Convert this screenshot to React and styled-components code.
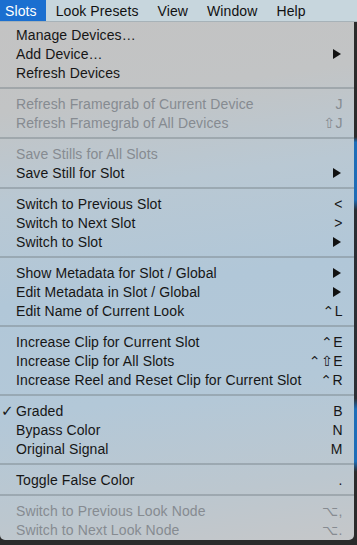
import React from 'react'
import styled, { createGlobalStyle } from 'styled-components'

const GlobalStyle = createGlobalStyle`
  html, body {
    margin: 0;
    padding: 0;
    background: #25292e;
  }
  body {
    font-family: "Liberation Sans", Arial, "DejaVu Sans", sans-serif;
    -webkit-font-smoothing: antialiased;
  }
`

const menuItems = [
  { label: 'Manage Devices…' },
  { label: 'Add Device…', sub: true },
  { label: 'Refresh Devices' },
  'sep',
  { label: 'Refresh Framegrab of Current Device', key: 'J', disabled: true },
  { label: 'Refresh Framegrab of All Devices', key: '⇧J', disabled: true },
  'sep',
  { label: 'Save Stills for All Slots', disabled: true },
  { label: 'Save Still for Slot', sub: true },
  'sep',
  { label: 'Switch to Previous Slot', key: '<' },
  { label: 'Switch to Next Slot', key: '>' },
  { label: 'Switch to Slot', sub: true },
  'sep',
  { label: 'Show Metadata for Slot / Global', sub: true },
  { label: 'Edit Metadata in Slot / Global', sub: true },
  { label: 'Edit Name of Current Look', key: '⌃L' },
  'sep',
  { label: 'Increase Clip for Current Slot', key: '⌃E' },
  { label: 'Increase Clip for All Slots', key: '⌃⇧E' },
  { label: 'Increase Reel and Reset Clip for Current Slot', key: '⌃R' },
  'sep',
  { label: 'Graded', key: 'B', checked: true },
  { label: 'Bypass Color', key: 'N' },
  { label: 'Original Signal', key: 'M' },
  'sep',
  { label: 'Toggle False Color', key: '.' },
  'sep',
  { label: 'Switch to Previous Look Node', key: '⌥,', disabled: true },
  { label: 'Switch to Next Look Node', key: '⌥.', disabled: true },
]

const titles = ['Slots', 'Look Presets', 'View', 'Window', 'Help']

function App() {
  return (
    <>
      <GlobalStyle />
      <Screen>
        <MenuBar>
          {titles.map((t, i) => (
            <MenuTitle key={t} $active={i === 0}>{t}</MenuTitle>
          ))}
        </MenuBar>
        <Backdrop>
          <Menu>
            {menuItems.map((item, i) =>
              item === 'sep' ? (
                <Separator key={i} />
              ) : (
                <Item key={i} $disabled={item.disabled}>
                  <Check>{item.checked ? '✓' : ''}</Check>
                  <Label>{item.label}</Label>
                  {item.sub ? (
                    <Arrow viewBox="0 0 8 10" width="8" height="10">
                      <path d="M0 0 L8 5 L0 10 Z" fill="#111" />
                    </Arrow>
                  ) : (
                    <Shortcut>{item.key}</Shortcut>
                  )}
                </Item>
              )
            )}
          </Menu>
        </Backdrop>
      </Screen>
    </>
  )
}

const Screen = styled.div`
  width: 357px;
  height: 545px;
  overflow: hidden;
  display: flex;
  flex-direction: column;
`

const MenuBar = styled.div`
  height: 22px;
  display: flex;
  align-items: stretch;
  background: #c7d6dd;
  border-bottom: 1px solid #a7b2b8;
  box-sizing: border-box;
`

const MenuTitle = styled.div`
  font-size: 14px;
  letter-spacing: 0.1px;
  display: flex;
  align-items: center;
  padding: 0 9px 0 ${p => (p.$active ? '5px' : '9px')};
  margin-right: 1px;
  background: ${p => (p.$active ? '#1b6fd0' : 'transparent')};
  color: ${p => (p.$active ? '#fff' : '#111')};
`

const Backdrop = styled.div`
  flex: 1;
  display: flex;
  align-items: flex-start;
  background: linear-gradient(180deg, #2b2b2b 0%, #2b2b2b 22%, #1d6db8 23%, #1e6cb6 34%, #2a2d32 36%, #2c2f34 72%, #1d6db8 74%, #1d6db8 84%, #2b2b2b 86%);
`

const Menu = styled.div`
  width: 354px;
  padding: 3px 0 1px;
  border-radius: 0 0 5px 5px;
  background: linear-gradient(172deg, #c3c3c3 0%, #c2c4c5 16%, #b9c8d3 32%, #b1c7d8 50%, #b3c8d8 70%, #bcc7cf 88%, #c5c7c9 100%);
  display: flex;
  flex-direction: column;
`

const Item = styled.div`
  height: 19px;
  display: grid;
  grid-template-columns: 16px 1fr auto;
  align-items: center;
  padding-right: 11px;
  font-size: 14px;
  letter-spacing: 0.1px;
  color: ${p => (p.$disabled ? '#868b91' : '#161616')};
`

const Check = styled.span`
  font-family: "DejaVu Sans", sans-serif;
  font-size: 15px;
  font-weight: bold;
  padding-left: 1px;
  color: #161616;
`

const Label = styled.span`
  white-space: nowrap;
`

const Shortcut = styled.span`
  font-family: "Liberation Sans", "DejaVu Sans", sans-serif;
  text-align: right;
  letter-spacing: 0.5px;
`

const Arrow = styled.svg`
  margin-right: 2px;
  display: block;
`

const Separator = styled.div`
  height: 2px;
  margin: 5px 0;
  background: rgba(120, 130, 138, 0.45);
`

export default App
